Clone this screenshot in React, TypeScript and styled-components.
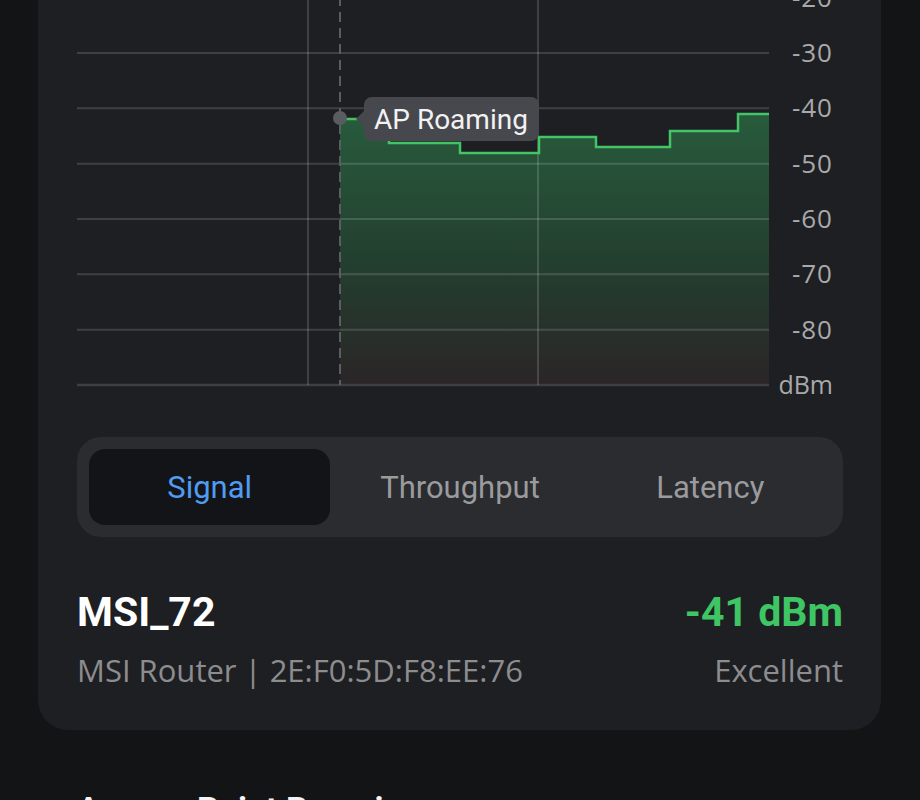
import styled, { createGlobalStyle } from 'styled-components';

const GlobalStyle = createGlobalStyle`
  html, body {
    margin: 0;
    padding: 0;
    background: #131416;
    font-family: Roboto, "Liberation Sans", sans-serif;
    overflow: hidden;
  }
`;

const Page = styled.div`
  margin-top: -40px;
  padding: 0 39px 0 38px;
`;

const Card = styled.section`
  background: #1e1f22;
  border-radius: 0 0 30px 30px;
  padding: 20px 38px 42px 39px;
`;

const ChartWrap = styled.div`
  position: relative;
  width: 766px;
  height: 420px;
`;

const Tooltip = styled.div`
  position: absolute;
  left: 287px;
  top: 117px;
  height: 44px;
  padding: 0 11px 0 10px;
  display: flex;
  align-items: center;
  background: #46484d;
  border-radius: 8px;
  color: #f2f2f2;
  font-size: 28px;
  white-space: nowrap;

  &::before {
    content: '';
    position: absolute;
    left: -8px;
    top: 14px;
    border-top: 8px solid transparent;
    border-bottom: 8px solid transparent;
    border-right: 8px solid #46484d;
  }
`;

const Tabs = styled.div`
  margin-top: 37px;
  height: 100px;
  box-sizing: border-box;
  padding: 12px;
  background: #2a2c30;
  border-radius: 24px;
  display: grid;
  grid-template-columns: repeat(3, 1fr);
  gap: 9px;
`;

const Tab = styled.div<{ $active?: boolean }>`
  display: flex;
  align-items: center;
  justify-content: center;
  border-radius: 16px;
  font-size: 31px;
  background: ${p => (p.$active ? '#131417' : 'transparent')};
  color: ${p => (p.$active ? '#4f9cf2' : '#9b9b9d')};
`;

const InfoRow = styled.div`
  margin-top: 49px;
  display: flex;
  justify-content: space-between;
`;

const InfoCol = styled.div<{ $right?: boolean }>`
  display: flex;
  flex-direction: column;
  align-items: ${p => (p.$right ? 'flex-end' : 'flex-start')};
  gap: 14px;
`;

const Big = styled.div<{ $color: string }>`
  font-size: 41px;
  line-height: 52px;
  font-weight: 700;
  color: ${p => p.$color};
`;

const Small = styled.div`
  font-family: "Open Sans", Roboto, sans-serif;
  font-size: 31px;
  line-height: 36px;
  color: #8d8d8f;
`;

const Heading = styled.h2`
  margin: 59px 0 0;
  padding-left: 39px;
  font-size: 34px;
  line-height: 40px;
  font-weight: 700;
  color: #f4f4f4;
`;

// chart geometry, in svg coordinates (x offset 77, y offset -20)
const PLOT_W = 692;
const ROW = 55.33;
const BASE = 405;
const labels = ['-20', '-30', '-40', '-50', '-60', '-70', '-80'];

const steps: [number, number][] = [
  [340, 119], [389, 119], [389, 143], [460, 143], [460, 153], [539, 153],
  [539, 137], [596, 137], [596, 147], [670, 147], [670, 131], [738, 131],
  [738, 114], [769, 114],
];

const rowY = (i: number) => BASE - (7 - i) * ROW;

const SignalChart = () => {
  const pts = steps.map(([x, y]) => [x - 77, y + 20]);
  const line = pts.map(([x, y], i) => `${i ? 'L' : 'M'}${x} ${y}`).join(' ');
  const area = `${line} L${PLOT_W} ${BASE} L${pts[0][0]} ${BASE} Z`;
  return (
    <svg width="766" height="420" viewBox="0 0 766 420">
      <defs>
        <linearGradient id="fill" x1="0" y1="0" x2="0" y2="1">
          <stop offset="0" stopColor="#285b3c" />
          <stop offset="0.55" stopColor="#233f2f" />
          <stop offset="1" stopColor="#2b2527" />
        </linearGradient>
      </defs>
      <path d={area} fill="url(#fill)" />
      {labels.map((_, i) => (
        <line key={i} x1="0" x2={PLOT_W} y1={rowY(i)} y2={rowY(i)}
          stroke="rgba(255,255,255,0.15)" strokeWidth="2" />
      ))}
      <line x1="0" x2={PLOT_W} y1={BASE} y2={BASE} stroke="#3e3f43" strokeWidth="2.5" />
      <line x1="231" x2="231" y1="0" y2={BASE} stroke="rgba(255,255,255,0.15)" strokeWidth="2" />
      <line x1="461" x2="461" y1="0" y2={BASE} stroke="rgba(255,255,255,0.15)" strokeWidth="2" />
      <line x1="263" x2="263" y1="0" y2={BASE} stroke="#5c5d61" strokeWidth="2" strokeDasharray="10 6" />
      <path d={line} fill="none" stroke="#42c467" strokeWidth="2.5" />
      <circle cx="263" cy="138" r="7" fill="#5a5c61" />
      {labels.map((l, i) => (
        <text key={l} x="756" y={rowY(i) + 9} textAnchor="end" letterSpacing="1"
          fontSize="26" fill="#a9a9ab" fontFamily="'Open Sans', Roboto, sans-serif">{l}</text>
      ))}
      <text x="756" y={BASE + 9} textAnchor="end" fontSize="25" fill="#a9a9ab"
        fontFamily="'Open Sans', Roboto, sans-serif">dBm</text>
    </svg>
  );
};

export default function App() {
  return (
    <>
      <GlobalStyle />
      <Page>
        <Card>
          <ChartWrap>
            <SignalChart />
            <Tooltip>AP Roaming</Tooltip>
          </ChartWrap>
          <Tabs>
            <Tab $active>Signal</Tab>
            <Tab>Throughput</Tab>
            <Tab>Latency</Tab>
          </Tabs>
          <InfoRow>
            <InfoCol>
              <Big $color="#ffffff">MSI_72</Big>
              <Small>MSI Router | 2E:F0:5D:F8:EE:76</Small>
            </InfoCol>
            <InfoCol $right>
              <Big $color="#3ec564">-41 dBm</Big>
              <Small>Excellent</Small>
            </InfoCol>
          </InfoRow>
        </Card>
        <Heading>Access Point Roaming</Heading>
      </Page>
    </>
  );
}
